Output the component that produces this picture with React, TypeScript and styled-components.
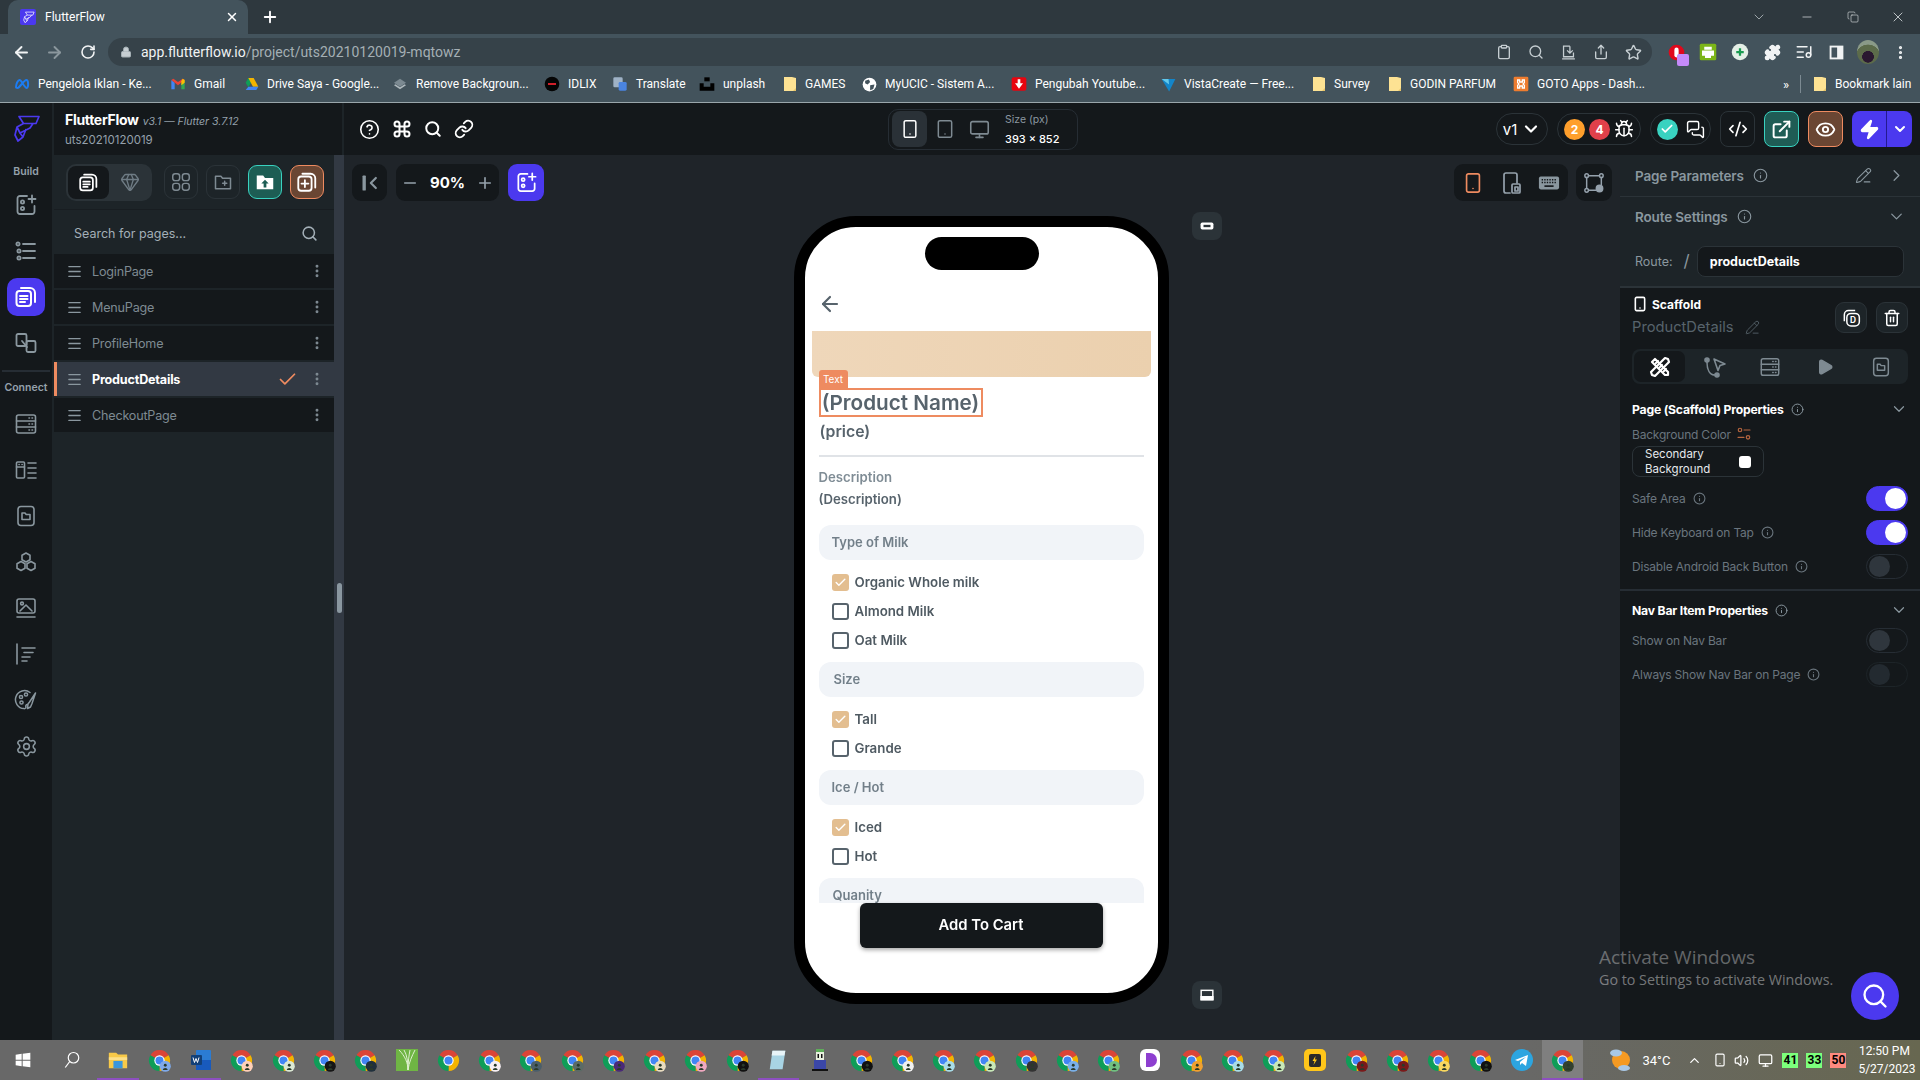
import React from 'react';
import styled, {createGlobalStyle} from 'styled-components';
import {
  ArrowLeft, ArrowRight, Bug, Check, ChevronDown, ChevronRight, ChevronUp, CircleHelp, Clipboard, CodeXml, Command,
  Copy, ExternalLink, Eye, Gem, Info, Link, ListMusic, Lock, Menu, MessagesSquare, Minus, Monitor,
  MoreVertical, PencilLine, Play, Plus, Puzzle, RotateCw, Search, Settings, Share, Smartphone, Star, Tablet, Trash2,
  Volume2, X, Zap,
} from 'lucide-react';

const ui = `Inter, "Liberation Sans", sans-serif`;
const sys = `Roboto, "Liberation Sans", sans-serif`;

const GlobalStyle = createGlobalStyle`
  html, body { margin: 0; padding: 0; background: #14181b; }
  * { box-sizing: border-box; }
`;

/* ---------- drawn icons ---------- */

const Svg = ({s = 24, children, w = 1.8}: {s?: number; children: React.ReactNode; w?: number}) => (
  <svg width={s} height={s} viewBox="0 0 24 24" fill="none" stroke="currentColor" strokeWidth={w} strokeLinecap="round" strokeLinejoin="round">
    {children}
  </svg>
);

const AddBoard = ({s = 24}: {s?: number}) => (
  <Svg s={s}>
    <path d="M13 3H6a2.5 2.5 0 0 0-2.5 2.5v13A2.5 2.5 0 0 0 6 21h12a2.5 2.5 0 0 0 2.5-2.5V13" />
    <circle cx="8.5" cy="9" r="1.6" /><circle cx="8.5" cy="15.5" r="1.6" />
    <path d="M18 2.5v7M14.5 6h7" />
  </Svg>
);
const DotList = () => (
  <Svg>
    <circle cx="4" cy="5" r="1.6" /><circle cx="5" cy="12" r="1.6" /><circle cx="5" cy="19" r="1.6" />
    <path d="M9 5h12M9 12h12M9 19h12" />
  </Svg>
);
const Pages = ({s = 24}: {s?: number}) => (
  <Svg s={s} w={2}>
    <rect x="2.5" y="6" width="14.5" height="15" rx="3" />
    <path d="M6 11h7.5M6 14h7.5M6 17h5" />
    <path d="M7 3h9a5 5 0 0 1 5 5v9" />
  </Svg>
);
const Swap = () => (
  <Svg>
    <rect x="2.5" y="3" width="10" height="12" rx="1.5" />
    <rect x="12.5" y="10" width="9" height="11" rx="1.5" />
    <path d="M8 10l5 6" />
  </Svg>
);
const Database = ({s = 24}: {s?: number}) => (
  <Svg s={s} w={1.6}>
    <rect x="2.5" y="3" width="19" height="18" rx="2" />
    <path d="M2.5 9h19M2.5 15h19M15 6h.5M18 6h.5M15 12h.5M18 12h.5M15 18h.5M18 18h.5" />
  </Svg>
);
const DataTypes = () => (
  <Svg w={1.6}>
    <rect x="2.5" y="4" width="8" height="16" rx="1" />
    <path d="M2.5 9h8M5 6.5h.2M8 6.5h.2M14 5h8M14 10h8M14 15h8M14 20h8" />
  </Svg>
);
const FolderCard = ({s = 24}: {s?: number}) => (
  <Svg s={s} w={1.6}>
    <rect x="4" y="2.5" width="16" height="19" rx="3" />
    <path d="M8 9h3l1.2 1.5H16v5H8z" />
  </Svg>
);
const Hexes = () => (
  <Svg w={1.6}>
    <path d="M12 3l4 2.2v4.6L12 12 8 9.8V5.2z" />
    <path d="M7 11.5l4 2.3v4.4L7 20.5l-4-2.3v-4.4z" />
    <path d="M17 11.5l4 2.3v4.4l-4 2.3-4-2.3v-4.4z" />
  </Svg>
);
const Picture = () => (
  <Svg w={1.6}>
    <rect x="3" y="3" width="18" height="14" rx="2" />
    <circle cx="8" cy="7.5" r="1.4" />
    <path d="M6 15l6-6 6 6M3 21h18" />
  </Svg>
);
const AlignLines = () => (
  <Svg w={1.6}>
    <path d="M3 2v20M8 6h13M10 10.5h9M8 15h8M8 19h5" />
  </Svg>
);
const PaletteBrush = () => (
  <Svg w={1.5}>
    <path d="M16 4.5A9 9 0 1 0 10 20.6c1.5.2 2.2-.8 1.8-2-.3-1.2.4-2 1.6-2" />
    <circle cx="7" cy="9" r="1.6" /><circle cx="12" cy="6.5" r="1.6" /><circle cx="7.5" cy="14.5" r="1.6" />
    <path d="M21.5 5l-6 9-1.5 2-.5 4.5 3-1.5 1.5-3.5z" />
  </Svg>
);
const Ruler = () => (
  <Svg w={2.2}>
    <path d="M4 7l3-3 13 13v3h-3zM8 8l2-2M12 12l2-2M16 16l2-2" />
    <path d="M20 4l-3-1-14 14 1 3 3 1L21 7z" />
  </Svg>
);
const Flow = () => (
  <Svg w={1.6}>
    <circle cx="4" cy="5" r="2" fill="currentColor" /><circle cx="14" cy="20" r="2" fill="currentColor" />
    <path d="M4 7c0 8 3 13 8 13M11 4l11 5-5 1.5-2 5z" />
  </Svg>
);
const Graph = () => (
  <Svg s={22} w={1.6}>
    <circle cx="4" cy="4" r="2" /><circle cx="20" cy="4" r="2" /><circle cx="4" cy="20" r="2" />
    <circle cx="18" cy="18" r="3.5" fill="currentColor" />
    <path d="M6 4h12M4 6v12M20 6v8M6 20h8" />
  </Svg>
);
const PhoneSplit = () => (
  <Svg w={1.7}>
    <path d="M11 22H7a2 2 0 0 1-2-2V4a2 2 0 0 1 2-2h9a2 2 0 0 1 2 2v8" />
    <rect x="13" y="13" width="8" height="9" rx="1" /><rect x="16" y="16" width="3" height="4" />
  </Svg>
);
const KeyboardSolid = () => (
  <svg width="22" height="22" viewBox="0 0 24 24">
    <rect x="1" y="5" width="22" height="14" rx="2" fill="#8a979f" />
    <path d="M4 8.500h16M4 11.500h16" stroke="#14181b" strokeWidth="1.500" strokeDasharray="1.500 1.300" />
    <rect x="7" y="14.500" width="10" height="1.800" fill="#14181b" />
  </svg>
);
const CopyD = () => (
  <svg width="20" height="20" viewBox="0 0 24 24" fill="none" stroke="#fff" strokeWidth="1.800">
    <path d="M4 16V8a5 5 0 0 1 5-5h8" />
    <rect x="7" y="6.500" width="15" height="15" rx="5" />
    <text x="14.500" y="18" textAnchor="middle" fontSize="10" fontWeight="700" fill="#fff" stroke="none" fontFamily="Inter, sans-serif">D</text>
  </svg>
);
const Tune = () => (
  <Svg s={16} w={1.8}>
    <circle cx="6" cy="6" r="2.6" /><path d="M12 6h9M3 17h9" /><circle cx="18" cy="17" r="2.6" />
  </Svg>
);
const FolderUp = () => (
  <svg width="22" height="22" viewBox="0 0 24 24">
    <path d="M3 5h7l2 2.5h9V20H3z" fill="#fff" />
    <path d="M12 9.5l4 4h-2.5V18h-3v-4.5H8z" fill="#1d5d54" />
  </svg>
);
const FolderAdd = () => (
  <Svg s={20} w={1.8}>
    <path d="M3 5h6.5l2 2.5H21V20H3zM14 11v5M11.5 13.5h5" />
  </Svg>
);
const Grid4 = () => (
  <Svg s={22} w={1.6}>
    <rect x="3" y="3" width="7.5" height="7.5" rx="2.6" /><rect x="13.5" y="3" width="7.5" height="7.5" rx="2.6" />
    <rect x="3" y="13.5" width="7.5" height="7.5" rx="2.6" /><rect x="13.5" y="13.5" width="7.5" height="7.5" rx="2.6" />
  </Svg>
);
const PagesPlus = () => (
  <Svg s={22} w={2}>
    <rect x="2.5" y="6" width="14.5" height="15.5" rx="3" />
    <path d="M7 3h9a5 5 0 0 1 5 5v10M9.7 10v7.5M6 13.7h7.5" />
  </Svg>
);
const CollapseLeft = () => (
  <svg width="20" height="20" viewBox="0 0 24 24" fill="none">
    <rect x="3" y="3" width="4" height="18" rx="1" fill="#8a979f" />
    <path d="M19 6l-6 6 6 6" stroke="#8a979f" strokeWidth="2.6" strokeLinecap="round" strokeLinejoin="round" />
  </svg>
);
const Logo = ({s = 30, color = '#4b39ef'}: {s?: number; color?: string}) => (
  <svg width={s} height={s} viewBox="0 0 30 30" fill="none" stroke={color} strokeWidth="1.7" strokeLinejoin="round">
    <path d="M8 2.5h20l-3 7H12.5zM12.5 9.5L6 13l3 6 10-5 3-4.500M6 13l-2 8 3 6 5-4 3-8M9 19l3 4" />
  </svg>
);

const Chrome = ({badge, s = 23}: {badge?: string; s?: number}) => (
  <svg width={s} height={s} viewBox="0 0 24 24">
    <path d="M12 12L2.47 6.500A11 11 0 0 1 21.530 6.500z" fill="#db4437" />
    <path d="M12 12L21.530 6.500A11 11 0 0 1 12 23z" fill="#f4b400" />
    <path d="M12 12L12 23A11 11 0 0 1 2.47 6.500z" fill="#0f9d58" />
    <circle cx="12" cy="12" r="5.400" fill="#fff" />
    <circle cx="12" cy="12" r="4.200" fill="#4285f4" />
    {badge && <circle cx="18" cy="18" r="5.800" fill={badge} />}
    {badge && <circle cx="18" cy="17" r="1.500" fill="#2a3a2a" />}
    {badge && <path d="M15.500 22c0-3 5-3 5 0z" fill="#2a3a2a" />}
  </svg>
);

const FolderMini = () => (
  <svg width="14" height="16" viewBox="0 0 14 16">
    <path d="M1 1h8l4 1v13H1z" fill="#fde293" /><path d="M10 15l3-3v3z" fill="#e8c468" />
  </svg>
);

const BookmarkGlyph = ({kind}: {kind: string}) => {
  switch (kind) {
    case 'meta':
      return (
        <svg width="16" height="16" viewBox="0 0 24 24" fill="none" stroke="#1c7cf2" strokeWidth="3">
          <path d="M3 17c0-6 3-11 5.500-11S16 18 19 18c3 0 3-12-.5-12S8 18 5.500 18C4 18 3 18 3 17z" />
        </svg>
      );
    case 'gmail':
      return (
        <svg width="16" height="16" viewBox="0 0 24 24">
          <path d="M2 6v14h5V10z" fill="#4285f4" /><path d="M22 6v14h-5V10z" fill="#34a853" />
          <path d="M2 6l10 8 10-8-3-2-7 5-7-5z" fill="#ea4335" /><path d="M19 4l3 2v4l-5 4v-6z" fill="#fbbc04" />
        </svg>
      );
    case 'drive':
      return (
        <svg width="16" height="16" viewBox="0 0 24 24">
          <path d="M8 3h8L8 17l-4-7z" fill="#0f9d58" /><path d="M8 3h8l7 13h-8z" fill="#f4b400" /><path d="M4 21l4-5h15l-3 5z" fill="#4285f4" />
        </svg>
      );
    case 'layers':
      return (
        <svg width="16" height="16" viewBox="0 0 24 24">
          <path d="M12 4l9 6-9 6-9-6z" fill="#7c8a92" /><path d="M3 14l9 6 9-6-2-1.500-7 4.500-7-4.500z" fill="#aeb8bd" />
        </svg>
      );
    case 'idlix':
      return (
        <svg width="16" height="16" viewBox="0 0 24 24">
          <circle cx="12" cy="12" r="11" fill="#050505" /><rect x="6" y="10.500" width="12" height="3" fill="#d01f2a" />
        </svg>
      );
    case 'translate':
      return (
        <svg width="16" height="16" viewBox="0 0 24 24">
          <rect x="2" y="2" width="14" height="15" rx="2" fill="#9fb2c6" /><rect x="10" y="9" width="12" height="13" rx="2" fill="#4a84e0" />
        </svg>
      );
    case 'unplash':
      return (
        <svg width="16" height="16" viewBox="0 0 24 24">
          <rect x="8" y="2" width="8" height="6" fill="#000" /><path d="M1 11h6v5h10v-5h6v11H1z" fill="#000" />
        </svg>
      );
    case 'globe':
      return (
        <svg width="15" height="15" viewBox="0 0 24 24">
          <circle cx="12" cy="12" r="11" fill="#fff" /><path d="M5 6l6-2 2 4-4 4-4-2zM13 13l7-1-2 7-5 2z" fill="#43535c" />
        </svg>
      );
    case 'youtube':
      return (
        <svg width="16" height="16" viewBox="0 0 24 24">
          <rect x="1" y="2" width="22" height="20" rx="3" fill="#e8050f" /><path d="M10 5h4v6h4l-6 8-6-8h4z" fill="#fff" />
        </svg>
      );
    case 'vista':
      return (
        <svg width="15" height="15" viewBox="0 0 24 24">
          <path d="M1 3h22l-10 20z" fill="#1385c9" /><path d="M1 3h11l1 9z" fill="#63c8ea" />
        </svg>
      );
    case 'goto':
      return (
        <svg width="16" height="16" viewBox="0 0 24 24">
          <rect x="1" y="1" width="22" height="22" rx="2" fill="#ee7c2f" />
          <path d="M7 6h3v3h4V6h3v4l-2 2 2 2v4h-3v-3h-4v3H7v-4l2-2-2-2z" fill="none" stroke="#fff" strokeWidth="2" />
        </svg>
      );
    default:
      return <FolderMini />;
  }
};

/* ---------- browser chrome ---------- */

const Page = styled.div`
  position: relative;
  display: flex;
  flex-direction: column;
  width: 1920px;
  height: 1080px;
  overflow: hidden;
  font-family: ${ui};
  background: #14181b;
`;

const TabStrip = styled.div`
  display: flex;
  align-items: stretch;
  height: 34px;
  padding-left: 8px;
  background: #2e383e;
  color: #fff;
`;

const Tab = styled.div`
  display: flex;
  align-items: center;
  width: 240px;
  padding: 0 9px 0 12px;
  border-radius: 10px 10px 0 0;
  background: #43535c;
  font: 12px ${sys};

  span { margin-left: 9px; flex: 1; }
`;

const TabFavicon = styled.div`
  display: flex;
  align-items: center;
  justify-content: center;
  width: 16px;
  height: 16px;
  border-radius: 2px;
  background: #4b39ef;
`;

const NewTab = styled.div`
  display: flex;
  align-items: center;
  margin-left: 13px;
`;

const WindowButtons = styled.div`
  display: flex;
  align-items: center;
  margin-left: auto;
  padding-right: 14px;
  color: #dfe4e6;

  svg:nth-child(1) { margin-right: 33px; color: #b7c0c4; }
  svg:nth-child(2) { margin-right: 33px; }
  svg:nth-child(3) { margin-right: 31px; }
`;

const NavBar = styled.div`
  display: flex;
  align-items: flex-end;
  height: 32px;
  padding-left: 5px;
  background: #43535c;
  color: #eef1f2;
`;

const NavButton = styled.div<{$dim?: boolean}>`
  display: flex;
  align-items: center;
  justify-content: center;
  width: 33px;
  height: 28px;
  color: ${p => (p.$dim ? '#8b979d' : '#f1f3f4')};
`;

const Omnibox = styled.div`
  display: flex;
  align-items: center;
  width: 1544px;
  height: 28px;
  margin-left: 4px;
  padding-left: 12px;
  border-radius: 14px;
  background: #364249;
  font: 14px ${sys};
  color: #a4afb4;

  b { margin-left: 9px; font-weight: 400; color: #f1f3f4; }
`;

const OmniIcons = styled.div`
  display: flex;
  align-items: center;
  gap: 16px;
  margin-left: auto;
  padding-right: 10px;
  color: #c6ced2;
`;

const ExtIcons = styled.div`
  display: flex;
  align-items: center;
  height: 28px;
  margin-left: 8px;
  color: #f1f3f4;
`;

const ExtSlot = styled.div`
  position: relative;
  display: flex;
  align-items: center;
  justify-content: center;
  width: 32px;
  height: 28px;
`;

const ExtBadge = styled.div`
  position: absolute;
  right: 3px;
  bottom: 0;
  width: 12px;
  height: 12px;
  border-radius: 2px;
  background: #c58af9;
`;

const Avatar = styled.div`
  width: 22px;
  height: 24px;
  border-radius: 50%;
  background: radial-gradient(circle at 50% 70%, #2a1830 0 28%, #5c6b4a 30% 60%, #8a9a88 62%);
`;

const BookmarkBar = styled.div`
  display: flex;
  align-items: center;
  height: 37px;
  padding-left: 14px;
  background: #43535c;
  border-bottom: 1px solid #9aa6ab;
  font: 12px ${sys};
  color: #fff;
`;

const Bookmark = styled.div<{$w: number; $mr: number}>`
  display: flex;
  align-items: center;
  flex: none;
  gap: 8px;
  margin-right: ${p => p.$mr}px;

  span {
    display: block;
    width: ${p => p.$w}px;
    white-space: nowrap;
  }
`;

const OverflowMark = styled.div`
  display: flex;
  align-items: center;
  margin-left: auto;
  padding-right: 11px;
  margin-right: 12px;
  height: 18px;
  border-right: 1px solid #7c8a92;
  font-size: 13px;
`;

const bookmarks = [
  {kind: 'meta', label: 'Pengelola Iklan - Ke...', w: 114, mr: 18},
  {kind: 'gmail', label: 'Gmail', w: 31, mr: 18},
  {kind: 'drive', label: 'Drive Saya - Google...', w: 113, mr: 12},
  {kind: 'layers', label: 'Remove Backgroun...', w: 111, mr: 17},
  {kind: 'idlix', label: 'IDLIX', w: 28, mr: 16},
  {kind: 'translate', label: 'Translate', w: 47, mr: 16},
  {kind: 'unplash', label: 'unplash', w: 41, mr: 19},
  {kind: 'folder', label: 'GAMES', w: 39, mr: 18},
  {kind: 'globe', label: 'MyUCIC - Sistem A...', w: 110, mr: 16},
  {kind: 'youtube', label: 'Pengubah Youtube...', w: 109, mr: 17},
  {kind: 'vista', label: 'VistaCreate — Free...', w: 110, mr: 18},
  {kind: 'folder', label: 'Survey', w: 36, mr: 18},
  {kind: 'folder', label: 'GODIN PARFUM', w: 86, mr: 17},
  {kind: 'goto', label: 'GOTO Apps - Dash...', w: 108, mr: 0},
];

/* ---------- app header ---------- */

const AppHeader = styled.div`
  display: flex;
  align-items: center;
  height: 52px;
  background: #14181b;
`;

const LogoCell = styled.div`
  display: flex;
  align-items: center;
  justify-content: center;
  width: 54px;
  height: 100%;
  border-right: 2px solid #1d2428;
`;

const Brand = styled.div`
  width: 290px;
  height: 100%;
  padding: 8px 0 0 11px;
  border-right: 2px solid #1d2428;
`;

const BrandLine = styled.div`
  display: flex;
  align-items: baseline;
  gap: 4px;
  font-size: 14px;
  font-weight: 700;
  color: #fff;
  letter-spacing: -0.3px;

  em { font-size: 10.500px; font-weight: 400; color: #95a1ac; letter-spacing: 0; }
`;

const BrandProject = styled.div`
  margin-top: 5px;
  font-size: 11.500px;
  color: #95a1ac;
`;

const HelpIcons = styled.div`
  display: flex;
  align-items: center;
  gap: 12px;
  width: 544px;
  padding-left: 15px;
  color: #fff;
`;

const DevicePill = styled.div`
  display: flex;
  align-items: center;
  width: 190px;
  height: 41px;
  padding-left: 3px;
  border: 1px solid #262d34;
  border-radius: 10px;
  color: #7e8a92;
`;

const DeviceCell = styled.div<{$active?: boolean}>`
  display: flex;
  align-items: center;
  justify-content: center;
  width: 35px;
  height: 36px;
  border-radius: 8px;
  background: ${p => (p.$active ? '#2a3137' : 'transparent')};
  color: ${p => (p.$active ? '#fff' : '#7e8a92')};
`;

const DeviceSize = styled.div`
  margin-left: 8px;
  font-size: 10.500px;
  color: #8b97a0;

  b { display: block; margin-top: 6px; font-size: 11px; font-weight: 500; color: #fff; }
`;

const HeaderRight = styled.div`
  display: flex;
  align-items: center;
  margin-left: auto;
  padding-right: 8px;
  color: #fff;
`;

const HeaderPill = styled.div<{$w: number; $mr: number; $gap?: number}>`
  display: flex;
  align-items: center;
  justify-content: center;
  gap: ${p => p.$gap ?? 4}px;
  width: ${p => p.$w}px;
  height: 32px;
  margin-right: ${p => p.$mr}px;
  border: 1px solid #2b3338;
  border-radius: 16px;
  font-size: 15px;
`;

const CountDot = styled.div<{$bg: string}>`
  display: flex;
  align-items: center;
  justify-content: center;
  width: 21px;
  height: 21px;
  border-radius: 50%;
  background: ${p => p.$bg};
  font-size: 12px;
  font-weight: 700;
`;

const SquareButton = styled.div<{$bg: string; $line: string; $mr?: number}>`
  display: flex;
  align-items: center;
  justify-content: center;
  width: 35px;
  height: 36px;
  margin-right: ${p => p.$mr ?? 9}px;
  border: 1.500px solid ${p => p.$line};
  border-radius: 8px;
  background: ${p => p.$bg};
`;

const RunButton = styled.div`
  display: flex;
  align-items: center;
  width: 60px;
  height: 36px;
  border-radius: 8px;
  background: #4b39ef;

  > div { display: flex; align-items: center; justify-content: center; width: 34px; height: 100%; }
  > div + div { width: 26px; border-left: 1px solid #241a90; }
`;

/* ---------- body ---------- */

const Body = styled.div`
  display: flex;
  flex: 1;
  min-height: 0;
`;

const Rail = styled.div`
  display: flex;
  flex-direction: column;
  align-items: center;
  flex: none;
  width: 54px;
  border-right: 2px solid #1d2428;
  background: #14181b;
  color: #8a979f;
`;

const RailLabel = styled.div<{$top: number}>`
  margin-top: ${p => p.$top}px;
  font-size: 10.500px;
  font-weight: 600;
  color: #95a1ac;
`;

const RailItem = styled.div<{$active?: boolean; $top?: number}>`
  display: flex;
  align-items: center;
  justify-content: center;
  width: 38px;
  height: 38px;
  margin-top: ${p => p.$top ?? 8}px;
  border-radius: 10px;
  background: ${p => (p.$active ? '#4b39ef' : 'transparent')};
  color: ${p => (p.$active ? '#fff' : '#8a979f')};
`;

const RailDivider = styled.div`
  width: 48px;
  height: 2px;
  margin-top: 8px;
  background: #262d34;
`;

const LeftPanel = styled.div`
  flex: none;
  width: 280px;
  background: #1d2428;
`;

const PanelTools = styled.div`
  display: flex;
  align-items: center;
  height: 55px;
  padding-left: 12px;
  border-bottom: 1px solid #181d21;
`;

const Segmented = styled.div`
  display: flex;
  align-items: center;
  width: 86px;
  height: 37px;
  margin-right: 12px;
  padding: 2px;
  border-radius: 10px;
  background: #2b3338;
  color: #6f7c85;

  > div { display: flex; align-items: center; justify-content: center; width: 42px; height: 33px; border-radius: 8px; }
  > div:first-child { background: #14181b; color: #fff; }
`;

const ToolButton = styled.div<{$bg?: string; $line?: string}>`
  display: flex;
  align-items: center;
  justify-content: center;
  width: 34px;
  height: 34px;
  margin-right: 8px;
  border: 1.500px solid ${p => p.$line ?? '#2b3338'};
  border-radius: 9px;
  background: ${p => p.$bg ?? 'transparent'};
  color: ${p => (p.$bg ? '#fff' : '#7e8a92')};
`;

const SearchRow = styled.div`
  display: flex;
  align-items: center;
  justify-content: space-between;
  height: 44px;
  padding: 3px 16px 0 20px;
  font-size: 12.500px;
  color: #a3afb7;
`;

const PageList = styled.div`
  display: flex;
  flex-direction: column;
  gap: 2px;
`;

const PageRow = styled.div<{$active?: boolean}>`
  display: flex;
  align-items: center;
  height: 34px;
  padding-left: ${p => (p.$active ? 9 : 12)}px;
  border-left: ${p => (p.$active ? '3px solid #ee8b60' : '0')};
  background: ${p => (p.$active ? '#323943' : '#14181b')};
  color: #8a979f;
`;

const PageName = styled.div<{$active?: boolean}>`
  margin-left: 9px;
  flex: 1;
  font-size: 12.600px;
  font-weight: ${p => (p.$active ? 700 : 400)};
  color: ${p => (p.$active ? '#fff' : '#7e8a92')};
  letter-spacing: -0.2px;
`;

const RowDots = styled.div`
  display: flex;
  justify-content: center;
  width: 34px;
  margin-left: 2px;
  color: #7e8a92;
`;

const ScrollGutter = styled.div`
  flex: none;
  width: 10px;
  padding: 428px 3px 0;
  background: #323943;

  div { width: 5px; height: 30px; border-radius: 3px; background: #8a97a0; }
`;

/* ---------- canvas ---------- */

const Canvas = styled.div`
  display: flex;
  flex-direction: column;
  align-items: center;
  flex: 1;
  min-width: 0;
  padding: 9px 8px 0;
  background: #1f2429;
`;

const CanvasBar = styled.div`
  display: flex;
  align-items: center;
  align-self: stretch;
  height: 37px;
  color: #95a1ac;
`;

const FloatGroup = styled.div<{$w: number; $ml?: number}>`
  display: flex;
  align-items: center;
  justify-content: space-around;
  width: ${p => p.$w}px;
  height: 37px;
  margin-left: ${p => p.$ml ?? 0}px;
  border-radius: 9px;
  background: #14181b;
`;

const ZoomValue = styled.span`
  font-size: 15px;
  font-weight: 700;
  color: #fff;
`;

const AccentButton = styled.div`
  display: flex;
  align-items: center;
  justify-content: center;
  width: 36px;
  height: 37px;
  margin-left: 9px;
  border-radius: 9px;
  background: #4b39ef;
  color: #fff;
`;

const PhoneFrame = styled.div`
  position: relative;
  flex: none;
  width: 375px;
  height: 788px;
  margin: 15px 2px 0 0;
  border: 11px solid #000;
  border-radius: 62px;
  background: #fff;
`;

const SideChip = styled.div<{$bottom?: boolean}>`
  position: absolute;
  left: 387px;
  top: ${p => (p.$bottom ? 754 : -15)}px;
  display: flex;
  align-items: center;
  justify-content: center;
  width: 30px;
  height: 28px;
  border-radius: 8px;
  background: #2b3338;
  color: #fff;
`;

const Screen = styled.div`
  position: relative;
  display: flex;
  flex-direction: column;
  height: 100%;
  overflow: hidden;
  border-radius: 51px;
  filter: blur(0.5px);
`;

const Notch = styled.div`
  position: absolute;
  top: 10px;
  left: 120px;
  width: 114px;
  height: 33px;
  border-radius: 17px;
  background: #000;
`;

const ScrollArea = styled.div`
  flex: none;
  height: 676px;
  overflow: hidden;
`;

const AppBarRow = styled.div`
  height: 104px;
  padding: 65px 0 0 13px;
  color: #57636c;
`;

const Banner = styled.div`
  height: 46px;
  margin: 0 7px;
  border-radius: 0 0 6px 6px;
  background: linear-gradient(90deg, #efd7ba, #ebd0ae);
`;

const Content = styled.div`
  display: flex;
  flex-direction: column;
  align-items: flex-start;
  padding: 0 14px;
`;

const Selected = styled.div`
  position: relative;
  height: 29px;
  width: 164px;
  margin-top: 11px;
  border: 2px solid #ee8b60;
  display: flex;
  align-items: center;
  justify-content: center;
  font-size: 20.700px;
  font-weight: 600;
  color: #57636c;
  white-space: nowrap;
`;

const SelectionTag = styled.div`
  position: absolute;
  left: -2px;
  top: -20px;
  width: 29px;
  height: 18px;
  border-radius: 3px 3px 0 0;
  background: #ee8b60;
  font-size: 10px;
  line-height: 18px;
  text-align: center;
  font-weight: 400;
  color: #fff;
`;

const Price = styled.div`
  height: 22px;
  margin: 4px 0 0 1px;
  font-size: 15.800px;
  line-height: 22px;
  font-weight: 600;
  color: #57636c;
`;

const Rule = styled.div`
  align-self: stretch;
  height: 2px;
  margin-top: 12px;
  background: #e0e3e7;
`;

const DescLabel = styled.div<{$strong?: boolean}>`
  height: 17px;
  margin-top: ${p => (p.$strong ? 5 : 12)}px;
  font-size: 13.200px;
  line-height: 17px;
  font-weight: 600;
  color: ${p => (p.$strong ? '#57636c' : '#7f8c95')};
`;

const OptionHeader = styled.div<{$first?: boolean; $ml: number}>`
  flex: none;
  align-self: stretch;
  height: 35px;
  margin-top: ${p => (p.$first ? 17 : 0)}px;
  padding-left: ${p => p.$ml}px;
  border-radius: 12px;
  background: #f1f4f8;
  font-size: 13px;
  line-height: 35px;
  font-weight: 600;
  color: #727f89;
`;

const OptionList = styled.div`
  margin: 7.500px 0;
`;

const OptionRow = styled.div`
  display: flex;
  align-items: center;
  gap: 6px;
  height: 29px;
  padding-left: 13px;
  font-size: 13.300px;
  font-weight: 600;
  color: #4f5a62;
`;

const CheckBox = styled.div<{$on?: boolean}>`
  display: flex;
  align-items: center;
  justify-content: center;
  width: 17px;
  height: 17px;
  border: ${p => (p.$on ? '0' : '2px solid #57636c')};
  border-radius: 3px;
  background: ${p => (p.$on ? '#e3be90' : '#fff')};
  color: #fff;
`;

const CartButton = styled.div`
  flex: none;
  align-self: center;
  width: 243px;
  height: 45px;
  border-radius: 6px;
  background: #14181b;
  box-shadow: 0 2px 4px rgba(0, 0, 0, 0.35);
  font-size: 14.800px;
  line-height: 45px;
  font-weight: 600;
  text-align: center;
  color: #fff;
`;

/* ---------- right panel ---------- */

const RightPanel = styled.div`
  display: flex;
  flex-direction: column;
  flex: none;
  width: 300px;
  background: #14181b;
`;

const RightTop = styled.div`
  height: 133px;
  border-bottom: 2px solid #2b3338;
  background: #1d2428;
`;

const AccordionRow = styled.div<{$h: number; $line?: boolean}>`
  display: flex;
  align-items: center;
  height: ${p => p.$h}px;
  padding: 0 14px 0 15px;
  border-bottom: ${p => (p.$line ? '1px solid #2b3338' : '0')};
  font-size: 13.500px;
  font-weight: 600;
  color: #8a979f;
  letter-spacing: -0.15px;

  svg:first-of-type { margin-left: 9px; }
`;

const RowEnd = styled.div`
  display: flex;
  align-items: center;
  gap: 15px;
  margin-left: auto;
`;

const RouteRow = styled.div`
  display: flex;
  align-items: center;
  height: 30px;
  margin-top: 10px;
  padding-left: 15px;
  font-size: 12.500px;
  color: #8a979f;

  i { margin-left: 11px; font-size: 17px; font-style: normal; }
`;

const RouteInput = styled.div`
  width: 207px;
  height: 31px;
  margin-left: 7px;
  padding-left: 12px;
  border: 1px solid #2b3338;
  border-radius: 8px;
  background: #14181b;
  font-size: 12.500px;
  line-height: 29px;
  font-weight: 700;
  color: #fff;
`;

const ScaffoldHead = styled.div`
  display: flex;
  justify-content: space-between;
  height: 61px;
  padding: 8px 12px 0;
`;

const ScaffoldTitle = styled.div`
  display: flex;
  align-items: center;
  gap: 4px;
  height: 16px;
  font-size: 12px;
  font-weight: 700;
  color: #fff;
`;

const WidgetName = styled.div`
  display: flex;
  align-items: center;
  gap: 11px;
  height: 22px;
  margin-top: 4px;
  font-size: 14.700px;
  color: #57636c;
`;

const HeadButtons = styled.div`
  display: flex;
  gap: 9px;
  margin-top: 6px;
`;

const IconTile = styled.div`
  display: flex;
  align-items: center;
  justify-content: center;
  width: 32px;
  height: 31px;
  border: 1px solid #2b3338;
  border-radius: 9px;
  background: #1d2428;
  color: #fff;
`;

const PropTabs = styled.div`
  display: flex;
  align-items: center;
  justify-content: space-between;
  height: 35px;
  margin: 0 12px;
  padding: 0 2px;
  border-radius: 8px;
  background: #1d2428;
  color: #7e8a92;
`;

const PropTab = styled.div<{$active?: boolean}>`
  display: flex;
  align-items: center;
  justify-content: center;
  width: 51px;
  height: 31px;
  border-radius: 7px;
  background: ${p => (p.$active ? '#14181b' : 'transparent')};
  color: ${p => (p.$active ? '#fff' : '#7e8a92')};
`;

const PropTitle = styled.div<{$top: number}>`
  display: flex;
  align-items: center;
  gap: 7px;
  height: 20px;
  margin-top: ${p => p.$top}px;
  padding: 0 12px;
  font-size: 12.200px;
  font-weight: 700;
  color: #fff;
  letter-spacing: -0.2px;

  svg:first-of-type { color: #8a979f; }
  svg:last-of-type { margin-left: auto; color: #8a979f; }
`;

const FieldLabel = styled.div`
  display: flex;
  align-items: center;
  gap: 5px;
  height: 18px;
  margin-top: 6px;
  padding-left: 12px;
  font-size: 12px;
  letter-spacing: -0.2px;
  color: #6a757e;

  svg { color: #b5653f; }
`;

const ColorField = styled.div`
  display: flex;
  align-items: center;
  justify-content: space-between;
  width: 132px;
  height: 31px;
  margin: 3px 0 4px 12px;
  padding: 0 12px 0 12px;
  border: 1px solid #2b3338;
  border-radius: 8px;
  font-size: 11.500px;
  line-height: 15px;
  color: #e6e9ec;

  i { width: 12px; height: 12px; border-radius: 3px; background: #fff; }
`;

const PropRow = styled.div<{$top?: number}>`
  display: flex;
  align-items: center;
  gap: 7px;
  height: 34px;
  margin-top: ${p => p.$top ?? 0}px;
  padding: 0 12px;
  font-size: 12px;
  letter-spacing: -0.2px;
  color: #6a757e;

  svg { color: #6a757e; }
`;

const Toggle = styled.div<{$on?: boolean; $dim?: boolean}>`
  display: flex;
  align-items: center;
  justify-content: ${p => (p.$on ? 'flex-end' : 'flex-start')};
  flex: none;
  width: 42px;
  height: 25px;
  margin-left: auto;
  padding: 1px 1.500px;
  border: 1px solid ${p => (p.$on ? '#4b39ef' : p.$dim ? '#1d2428' : '#262d34')};
  border-radius: 13px;
  background: ${p => (p.$on ? '#4b39ef' : 'transparent')};

  i {
    width: 21px;
    height: 21px;
    border-radius: 50%;
    background: ${p => (p.$on ? '#fff' : p.$dim ? '#232a30' : '#2f363d')};
  }
`;

const PanelRule = styled.div`
  height: 2px;
  margin-top: 6px;
  background: #262d34;
`;

/* ---------- overlays ---------- */

const Watermark = styled.div`
  position: absolute;
  left: 1599px;
  top: 944px;
  font: 19px "Open Sans", sans-serif;
  color: rgba(255, 255, 255, 0.35);
  white-space: nowrap;

  small { display: block; margin-top: 0; font-size: 14.300px; color: rgba(255, 255, 255, 0.42); }
`;

const SearchFab = styled.div`
  position: absolute;
  left: 1851px;
  top: 972px;
  display: flex;
  align-items: center;
  justify-content: center;
  width: 48px;
  height: 48px;
  border-radius: 50%;
  background: #4b39ef;
  color: #fff;
`;

/* ---------- taskbar ---------- */

const Taskbar = styled.div`
  display: flex;
  align-items: stretch;
  flex: none;
  height: 40px;
  background: linear-gradient(90deg, #686868 0, #686868 78%, #676750 100%);
  color: #fff;
`;

const TaskSlot = styled.div<{$w?: number; $running?: boolean; $active?: boolean}>`
  display: flex;
  align-items: center;
  justify-content: center;
  flex: none;
  width: ${p => p.$w ?? 41.29}px;
  background: ${p => (p.$active ? '#7f7f7f' : 'transparent')};
  box-shadow: ${p => (p.$running ? 'inset 0 -2px 0 #8d4fc0' : 'none')};
`;

const Tray = styled.div`
  display: flex;
  align-items: center;
  flex: 1;
  padding-left: 25px;
  font: 13px ${sys};

  > svg:nth-of-type(2) { margin-left: 17px; }
  > svg:nth-of-type(3) { margin-left: 11px; }
  > svg:nth-of-type(4) { margin-left: 7px; }
  > svg:nth-of-type(5) { margin: 0 9px; }
  > span { margin-left: 10px; }
`;

const TrayBox = styled.div<{$bg: string}>`
  width: 16px;
  height: 15px;
  margin-right: 8px;
  background: ${p => p.$bg};
  font-size: 12px;
  font-weight: 700;
  line-height: 15px;
  text-align: center;
  color: #000;
`;

const Clock = styled.div`
  margin-left: 4px;
  width: 52px;
  font-size: 12px;
  line-height: 18px;
  text-align: center;
  white-space: nowrap;
`;

const TaskGlyph = ({kind, badge}: {kind: string; badge?: string}) => {
  switch (kind) {
    case 'folder':
      return (
        <svg width="22" height="22" viewBox="0 0 24 24">
          <path d="M2 4h8l2 2h10v15H2z" fill="#f8c948" /><rect x="7" y="13" width="10" height="8" fill="#3a96dd" /><path d="M2 9h20v3H2z" fill="#fde08a" />
        </svg>
      );
    case 'word':
      return (
        <svg width="24" height="24" viewBox="0 0 24 24">
          <rect x="7" y="2" width="15" height="20" rx="1" fill="#2b7cd3" /><rect x="7" y="12" width="15" height="10" fill="#185abd" />
          <rect x="2" y="7" width="11" height="10" rx="1" fill="#124078" /><path d="M4 9.500l1.500 5 1.500-4 1.500 4 1.500-5" stroke="#fff" fill="none" />
        </svg>
      );
    case 'corel':
      return (
        <svg width="24" height="24" viewBox="0 0 24 24">
          <rect x="1" y="1" width="22" height="22" fill="#6fb544" />
          <path d="M4 2c6 6 9 13 9 20M9 2c3 5 4 12 4 20M20 2c-3 6-6 12-7 20M15 2c-1 5-2 12-2 20" stroke="#dff0d0" fill="none" />
        </svg>
      );
    case 'notepad':
      return (
        <svg width="22" height="22" viewBox="0 0 24 24">
          <path d="M6 2h14l-3 20H3z" fill="#a8d4e4" /><path d="M6 2h14l-1 5H5z" fill="#e8f4f8" />
        </svg>
      );
    case 'joker':
      return (
        <svg width="24" height="24" viewBox="0 0 24 24">
          <rect x="8" y="1" width="8" height="11" fill="#e8efe0" /><rect x="8" y="1" width="8" height="3" fill="#5fae5a" />
          <rect x="9.500" y="6" width="1.500" height="4" fill="#111" /><rect x="13" y="6" width="1.500" height="4" fill="#111" />
          <rect x="6" y="12" width="12" height="9" fill="#3b47a8" /><rect x="4" y="21" width="16" height="2" fill="#111" />
        </svg>
      );
    case 'dapp':
      return (
        <svg width="24" height="24" viewBox="0 0 24 24">
          <rect x="2" y="1" width="20" height="22" rx="6" fill="#fff" /><path d="M8 5h4a7 7 0 0 1 0 14H8z" fill="#8e3fd0" />
        </svg>
      );
    case 'wallet':
      return (
        <svg width="24" height="24" viewBox="0 0 24 24">
          <rect x="1" y="1" width="22" height="22" rx="5" fill="#ffc61a" /><rect x="6" y="6" width="12" height="13" rx="2" fill="#2a2a2a" /><path d="M12.500 8l-3 5h2l-1 4 3.500-5.500h-2z" fill="#ffc61a" />
        </svg>
      );
    case 'telegram':
      return (
        <svg width="24" height="24" viewBox="0 0 24 24">
          <circle cx="12" cy="12" r="11" fill="#2ca5e0" /><path d="M5 12l13-5-2 11-4-3-2 2v-3l6-5-8 4z" fill="#fff" />
        </svg>
      );
    default:
      return <Chrome badge={badge} />;
  }
};

const taskApps: {kind: string; badge?: string; running?: boolean; active?: boolean}[] = [
  {kind: 'folder', running: true},
  {kind: 'chrome', badge: '#7fa9e8'},
  {kind: 'word', running: true},
  {kind: 'chrome', badge: '#ffd0b8'},
  {kind: 'chrome', badge: '#dbe8d4'},
  {kind: 'chrome', badge: '#151515'},
  {kind: 'chrome', badge: '#20303c'},
  {kind: 'corel'},
  {kind: 'chrome'},
  {kind: 'chrome', badge: '#f8f0f4'},
  {kind: 'chrome', badge: '#4a5e6a'},
  {kind: 'chrome', badge: '#5b6b66'},
  {kind: 'chrome', badge: '#4a2a78'},
  {kind: 'chrome', badge: '#e8dcc0'},
  {kind: 'chrome', badge: '#f0a8c0'},
  {kind: 'chrome', badge: '#111'},
  {kind: 'notepad', running: true},
  {kind: 'joker'},
  {kind: 'chrome', badge: '#111'},
  {kind: 'chrome', badge: '#f0f0f0'},
  {kind: 'chrome', badge: '#a8dce8'},
  {kind: 'chrome', badge: '#c8e8b8'},
  {kind: 'chrome', badge: '#333'},
  {kind: 'chrome', badge: '#7ab0e8'},
  {kind: 'chrome', badge: '#70c080'},
  {kind: 'dapp'},
  {kind: 'chrome', badge: '#f0a030'},
  {kind: 'chrome', badge: '#a8dce8'},
  {kind: 'chrome', badge: '#c8e8b8'},
  {kind: 'wallet'},
  {kind: 'chrome', badge: '#7a1a1a'},
  {kind: 'chrome', badge: '#7a1a1a'},
  {kind: 'chrome', badge: '#f8d860'},
  {kind: 'chrome', badge: '#111'},
  {kind: 'telegram'},
  {kind: 'chrome', badge: '#33412f', running: true, active: true},
];

const pageNames = ['LoginPage', 'MenuPage', 'ProfileHome', 'ProductDetails', 'CheckoutPage'];

const optionGroups = [
  {title: 'Type of Milk', ml: 13, items: [['Organic Whole milk', true], ['Almond Milk', false], ['Oat Milk', false]]},
  {title: 'Size', ml: 15, items: [['Tall', true], ['Grande', false]]},
  {title: 'Ice / Hot', ml: 13, items: [['Iced', true], ['Hot', false]]},
] as {title: string; ml: number; items: [string, boolean][]}[];

const App = () => (
  <Page>
    <GlobalStyle />

    <TabStrip>
      <Tab>
        <TabFavicon><Logo s={13} color="#fff" /></TabFavicon>
        <span>FlutterFlow</span>
        <X size={14} strokeWidth={2.5} />
      </Tab>
      <NewTab><Plus size={18} strokeWidth={2.5} /></NewTab>
      <WindowButtons>
        <ChevronDown size={16} strokeWidth={1.2} />
        <Minus size={14} strokeWidth={1.2} />
        <Copy size={12} strokeWidth={1.2} />
        <X size={16} strokeWidth={1.2} />
      </WindowButtons>
    </TabStrip>

    <NavBar>
      <NavButton><ArrowLeft size={19} strokeWidth={2.4} /></NavButton>
      <NavButton $dim><ArrowRight size={19} strokeWidth={2.4} /></NavButton>
      <NavButton><RotateCw size={16} strokeWidth={2.4} /></NavButton>
      <Omnibox>
        <Lock size={12} fill="#c6ced2" />
        <b>app.flutterflow.io</b>/project/uts20210120019-mqtowz
        <OmniIcons>
          <Clipboard size={16} />
          <Search size={16} />
          <svg width="17" height="17" viewBox="0 0 24 24" fill="none" stroke="currentColor" strokeWidth="1.800">
            <path d="M14 3H5v15h14v-6M14 3v9M10 9l4 4 4-4M3 21h18" />
          </svg>
          <Share size={16} />
          <Star size={17} />
        </OmniIcons>
      </Omnibox>
      <ExtIcons>
        <ExtSlot>
          <svg width="17" height="17" viewBox="0 0 24 24"><circle cx="12" cy="12" r="11" fill="#e0081c" /><rect x="9" y="5" width="6" height="14" rx="3" fill="#fff" /></svg>
          <ExtBadge />
        </ExtSlot>
        <ExtSlot>
          <svg width="18" height="18" viewBox="0 0 24 24"><rect x="1" y="1" width="22" height="22" rx="2" fill="#7cb518" /><path d="M7 5h10v4H7zM4 10h16v7H4zM8 14h8v6H8z" fill="#fff" /></svg>
        </ExtSlot>
        <ExtSlot>
          <svg width="18" height="18" viewBox="0 0 24 24"><circle cx="12" cy="12" r="11" fill="#e4efe6" /><path d="M12 7v10M7 12h10" stroke="#1a9b50" strokeWidth="3" /></svg>
        </ExtSlot>
        <ExtSlot><Puzzle size={17} fill="#f1f3f4" /></ExtSlot>
        <ExtSlot><ListMusic size={18} /></ExtSlot>
        <ExtSlot>
          <svg width="15" height="15" viewBox="0 0 24 24"><path d="M1 1h22v22H1z" fill="#f1f3f4" /><path d="M4 4h9v16H4z" fill="#43535c" /></svg>
        </ExtSlot>
        <ExtSlot><Avatar /></ExtSlot>
        <ExtSlot><MoreVertical size={17} strokeWidth={2.5} /></ExtSlot>
      </ExtIcons>
    </NavBar>

    <BookmarkBar>
      {bookmarks.map(b => (
        <Bookmark key={b.label} $w={b.w} $mr={b.mr}>
          <BookmarkGlyph kind={b.kind} />
          <span>{b.label}</span>
        </Bookmark>
      ))}
      <OverflowMark>»</OverflowMark>
      <Bookmark $w={76} $mr={9}>
        <FolderMini />
        <span>Bookmark lain</span>
      </Bookmark>
    </BookmarkBar>

    <AppHeader>
      <LogoCell><Logo /></LogoCell>
      <Brand>
        <BrandLine>FlutterFlow <em>v3.1 — <i>Flutter 3.7.12</i></em></BrandLine>
        <BrandProject>uts20210120019</BrandProject>
      </Brand>
      <HelpIcons>
        <CircleHelp size={21} strokeWidth={1.8} />
        <Command size={20} strokeWidth={2.4} />
        <Search size={18} strokeWidth={2.6} />
        <Link size={20} strokeWidth={2.2} />
      </HelpIcons>
      <DevicePill>
        <DeviceCell $active><Smartphone size={20} strokeWidth={1.8} /></DeviceCell>
        <DeviceCell><Tablet size={20} strokeWidth={1.8} /></DeviceCell>
        <DeviceCell><Monitor size={21} strokeWidth={1.8} /></DeviceCell>
        <DeviceSize>Size (px)<b>393 x 852</b></DeviceSize>
      </DevicePill>
      <HeaderRight>
        <HeaderPill $w={52} $mr={9}>v1 <ChevronDown size={20} strokeWidth={2.6} /></HeaderPill>
        <HeaderPill $w={84} $mr={9}>
          <CountDot $bg="#ff9f2c">2</CountDot>
          <CountDot $bg="#e0404a">4</CountDot>
          <Bug size={20} strokeWidth={1.8} />
        </HeaderPill>
        <HeaderPill $w={61} $mr={9} $gap={8}>
          <CountDot $bg="#39d2c0"><Check size={14} strokeWidth={3} /></CountDot>
          <MessagesSquare size={19} strokeWidth={1.8} />
        </HeaderPill>
        <SquareButton $bg="transparent" $line="#2b3338"><CodeXml size={20} strokeWidth={2} /></SquareButton>
        <SquareButton $bg="#1f5c55" $line="#39d2c0"><ExternalLink size={21} strokeWidth={2.2} /></SquareButton>
        <SquareButton $bg="#6a4633" $line="#ee8b60"><Eye size={21} strokeWidth={2.2} /></SquareButton>
        <RunButton>
          <div><Zap size={21} fill="#fff" /></div>
          <div><ChevronDown size={16} strokeWidth={3} /></div>
        </RunButton>
      </HeaderRight>
    </AppHeader>

    <Body>
      <Rail>
        <RailLabel $top={10}>Build</RailLabel>
        <RailItem $top={8}><AddBoard /></RailItem>
        <RailItem><DotList /></RailItem>
        <RailItem $active><Pages /></RailItem>
        <RailItem><Swap /></RailItem>
        <RailDivider />
        <RailLabel $top={9}>Connect</RailLabel>
        <RailItem $top={11}><Database /></RailItem>
        <RailItem><DataTypes /></RailItem>
        <RailItem><FolderCard /></RailItem>
        <RailItem><Hexes /></RailItem>
        <RailItem><Picture /></RailItem>
        <RailItem><AlignLines /></RailItem>
        <RailItem><PaletteBrush /></RailItem>
        <RailItem><Settings size={23} strokeWidth={1.6} /></RailItem>
      </Rail>

      <LeftPanel>
        <PanelTools>
          <Segmented>
            <div><Pages s={21} /></div>
            <div><Gem size={20} strokeWidth={1.6} /></div>
          </Segmented>
          <ToolButton><Grid4 /></ToolButton>
          <ToolButton><FolderAdd /></ToolButton>
          <ToolButton $bg="#1d5d54" $line="#39d2c0"><FolderUp /></ToolButton>
          <ToolButton $bg="#6a4633" $line="#ee8b60"><PagesPlus /></ToolButton>
        </PanelTools>
        <SearchRow>
          Search for pages...
          <Search size={17} strokeWidth={2.2} />
        </SearchRow>
        <PageList>
          {pageNames.map(name => {
            const active = name === 'ProductDetails';
            return (
              <PageRow key={name} $active={active}>
                <Menu size={17} strokeWidth={1.8} />
                <PageName $active={active}>{name}</PageName>
                {active && <Check size={21} color="#ee8b60" strokeWidth={2} />}
                <RowDots><MoreVertical size={16} strokeWidth={2.4} /></RowDots>
              </PageRow>
            );
          })}
        </PageList>
      </LeftPanel>

      <ScrollGutter><div /></ScrollGutter>

      <Canvas>
        <CanvasBar>
          <FloatGroup $w={35}><CollapseLeft /></FloatGroup>
          <FloatGroup $w={103} $ml={9}>
            <Minus size={18} strokeWidth={2.2} />
            <ZoomValue>90%</ZoomValue>
            <Plus size={18} strokeWidth={2.2} />
          </FloatGroup>
          <AccentButton><AddBoard s={23} /></AccentButton>
          <FloatGroup $w={114} $ml={910}>
            <Smartphone size={22} strokeWidth={1.8} color="#ee8b60" />
            <PhoneSplit />
            <KeyboardSolid />
          </FloatGroup>
          <FloatGroup $w={36} $ml={8}><Graph /></FloatGroup>
        </CanvasBar>

        <PhoneFrame>
          <SideChip>
            <svg width="14" height="10" viewBox="0 0 24 16"><rect x="1" y="2" width="22" height="12" rx="3" fill="#fff" /><rect x="6" y="6" width="12" height="4" fill="#2b3338" /></svg>
          </SideChip>
          <SideChip $bottom>
            <svg width="14" height="12" viewBox="0 0 24 20" fill="none" stroke="#fff" strokeWidth="2.500"><rect x="2" y="2" width="20" height="16" /><rect x="2" y="13" width="20" height="5" fill="#fff" /></svg>
          </SideChip>
          <Screen>
            <Notch />
            <ScrollArea>
              <AppBarRow><ArrowLeft size={24} strokeWidth={2.2} /></AppBarRow>
              <Banner />
              <Content>
                <Selected>
                  <SelectionTag>Text</SelectionTag>
                  (Product Name)
                </Selected>
                <Price>(price)</Price>
                <Rule />
                <DescLabel>Description</DescLabel>
                <DescLabel $strong>(Description)</DescLabel>
                {optionGroups.map((group, i) => (
                  <React.Fragment key={group.title}>
                    <OptionHeader $first={i === 0} $ml={group.ml}>{group.title}</OptionHeader>
                    <OptionList>
                      {group.items.map(([label, on]) => (
                        <OptionRow key={label}>
                          <CheckBox $on={on}>{on && <Check size={13} strokeWidth={2.6} />}</CheckBox>
                          {label}
                        </OptionRow>
                      ))}
                    </OptionList>
                  </React.Fragment>
                ))}
                <OptionHeader $ml={14}>Quanity</OptionHeader>
              </Content>
            </ScrollArea>
            <CartButton>Add To Cart</CartButton>
          </Screen>
        </PhoneFrame>
      </Canvas>

      <RightPanel>
        <RightTop>
          <AccordionRow $h={42} $line>
            Page Parameters
            <Info size={15} strokeWidth={1.8} />
            <RowEnd>
              <PencilLine size={17} strokeWidth={1.5} />
              <ChevronRight size={19} strokeWidth={1.6} />
            </RowEnd>
          </AccordionRow>
          <AccordionRow $h={39}>
            Route Settings
            <Info size={15} strokeWidth={1.8} />
            <RowEnd><ChevronDown size={19} strokeWidth={1.6} /></RowEnd>
          </AccordionRow>
          <RouteRow>
            Route:<i>/</i>
            <RouteInput>productDetails</RouteInput>
          </RouteRow>
        </RightTop>

        <ScaffoldHead>
          <div>
            <ScaffoldTitle><Smartphone size={16} strokeWidth={2.4} />Scaffold</ScaffoldTitle>
            <WidgetName>ProductDetails <PencilLine size={15} strokeWidth={1.4} /></WidgetName>
          </div>
          <HeadButtons>
            <IconTile><CopyD /></IconTile>
            <IconTile><Trash2 size={18} strokeWidth={2} /></IconTile>
          </HeadButtons>
        </ScaffoldHead>

        <PropTabs>
          <PropTab $active><Ruler /></PropTab>
          <PropTab><Flow /></PropTab>
          <PropTab><Database s={22} /></PropTab>
          <PropTab><Play size={18} fill="#7e8a92" /></PropTab>
          <PropTab><FolderCard s={22} /></PropTab>
        </PropTabs>

        <PropTitle $top={15}>
          Page (Scaffold) Properties
          <Info size={13} strokeWidth={1.8} />
          <ChevronDown size={18} strokeWidth={1.6} />
        </PropTitle>
        <FieldLabel>Background Color <Tune /></FieldLabel>
        <ColorField>
          <span>Secondary<br />Background</span>
          <i />
        </ColorField>

        <PropRow>Safe Area <Info size={13} /> <Toggle $on><i /></Toggle></PropRow>
        <PropRow>Hide Keyboard on Tap <Info size={13} /> <Toggle $on><i /></Toggle></PropRow>
        <PropRow>Disable Android Back Button <Info size={13} /> <Toggle><i /></Toggle></PropRow>
        <PanelRule />
        <PropTitle $top={9}>
          Nav Bar Item Properties
          <Info size={13} strokeWidth={1.8} />
          <ChevronDown size={18} strokeWidth={1.6} />
        </PropTitle>
        <PropRow $top={3}>Show on Nav Bar <Toggle><i /></Toggle></PropRow>
        <PropRow>Always Show Nav Bar on Page <Info size={13} /> <Toggle $dim><i /></Toggle></PropRow>
      </RightPanel>
    </Body>

    <Taskbar>
      <TaskSlot $w={46}>
        <svg width="16" height="16" viewBox="0 0 24 24" fill="#fff"><path d="M1 4l9-1.300V11.500H1zM11.500 2.500L23 1v10.500H11.500zM1 13h9v8.500L1 20zM11.500 13H23v10l-11.500-1.600z" /></svg>
      </TaskSlot>
      <TaskSlot $w={51.35}>
        <svg width="18" height="18" viewBox="0 0 24 24" fill="none" stroke="#fff" strokeWidth="1.600"><circle cx="14" cy="9" r="7" /><path d="M9 14l-6 8" /></svg>
      </TaskSlot>
      {taskApps.map((app, i) => (
        <TaskSlot key={i} $running={app.running} $active={app.active}>
          <TaskGlyph kind={app.kind} badge={app.badge} />
        </TaskSlot>
      ))}
      <Tray>
        <svg width="24" height="26" viewBox="0 0 24 26"><circle cx="13" cy="13" r="9" fill="#f59a23" /><ellipse cx="8" cy="6" rx="6" ry="3.500" fill="#a9c8e6" /><ellipse cx="16" cy="21" rx="6" ry="3" fill="#a9c8e6" /></svg>
        <span>34°C</span>
        <ChevronUp size={15} />
        <Smartphone size={14} />
        <Volume2 size={15} />
        <Monitor size={15} />
        <TrayBox $bg="#7cff7c">41</TrayBox>
        <TrayBox $bg="#7cff7c">33</TrayBox>
        <TrayBox $bg="#ff8a80">50</TrayBox>
        <Clock>12:50 PM<br />5/27/2023</Clock>
      </Tray>
    </Taskbar>

    <Watermark>
      Activate Windows
      <small>Go to Settings to activate Windows.</small>
    </Watermark>
    <SearchFab><Search size={28} strokeWidth={2} /></SearchFab>
  </Page>
);

export default App;
